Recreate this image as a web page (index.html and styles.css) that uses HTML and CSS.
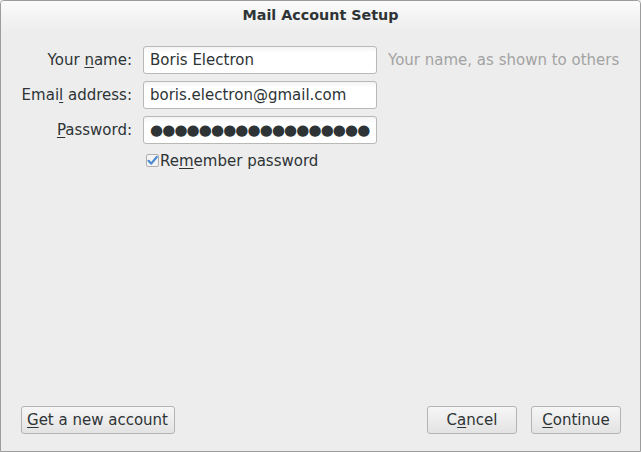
FILE: index.html
```html
<!DOCTYPE html>
<html>
<head>
<meta charset="utf-8">
<link rel="stylesheet" href="styles.css">
</head>
<body>
<div class="window">
  <div class="titlebar">Mail Account Setup</div>
  <div class="content">
    <div class="form">
      <label class="label">Your <u>n</u>ame:</label>
      <div class="input">Boris Electron</div>
      <div class="hint">Your name, as shown to others</div>

      <label class="label">Emai<u>l</u> address:</label>
      <div class="input">boris.electron@gmail.com</div>
      <div></div>

      <label class="label"><u>P</u>assword:</label>
      <div class="input password"><span class="dots">●●●●●●●●●●●●●●●●●●</span><span class="caret"></span></div>
      <div></div>

      <div></div>
      <div class="remember">
        <span class="checkbox"><svg width="13" height="13" viewBox="0 0 13 13"><path d="M2.5 6.8 L5.2 9.6 L10.8 3" fill="none" stroke="#4a8ad2" stroke-width="2.2" stroke-linecap="round" stroke-linejoin="round"/></svg></span>
        <span>Re<u>m</u>ember password</span>
      </div>
      <div></div>
    </div>
    <div class="spacer"></div>
    <div class="buttons">
      <button class="btn"><u>G</u>et a new account</button>
      <div class="grow"></div>
      <button class="btn narrow">C<u>a</u>ncel</button>
      <button class="btn narrow"><u>C</u>ontinue</button>
    </div>
  </div>
</div>
</body>
</html>
```
FILE: styles.css
```css
html, body {
  margin: 0;
  padding: 0;
  background: #ededed;
}
body {
  font-family: "DejaVu Sans", sans-serif;
  color: #2e3436;
}
.window {
  width: 641px;
  height: 452px;
  box-sizing: border-box;
  border: 1px solid #9c9c9c;
  border-radius: 4px 4px 0 0;
  background: #ededed;
  display: flex;
  flex-direction: column;
  overflow: hidden;
}
.titlebar {
  height: 30px;
  flex: none;
  background: linear-gradient(#fbfbfb, #ededed);
  text-align: center;
  font-weight: bold;
  font-size: 14.3px;
  line-height: 28px;
  color: #2e3436;
}
.content {
  flex: 1;
  display: flex;
  flex-direction: column;
  padding: 15px 19px 17px 20px;
}
.form {
  display: grid;
  grid-template-columns: 111px 234px auto;
  column-gap: 11px;
  row-gap: 7px;
  align-items: center;
  font-size: 15px;
}
.label {
  text-align: right;
  white-space: nowrap;
}
u {
  text-decoration: underline;
  text-underline-offset: 2px;
}
.input {
  height: 28px;
  box-sizing: border-box;
  border: 1px solid #b8b8b5;
  border-radius: 3px;
  background: linear-gradient(#f4f4f4, #ffffff 6px);
  padding: 0 6px;
  line-height: 26px;
  white-space: nowrap;
  overflow: hidden;
  color: #2e3436;
}
.password {
  display: flex;
  align-items: center;
}
.dots {
  letter-spacing: -0.9px;
  font-size: 15px;
}
.caret {
  width: 1px;
  height: 18px;
  background: #2e3436;
  margin-left: 1px;
}
.hint {
  color: #a3a3a3;
  white-space: nowrap;
}
.remember {
  display: flex;
  align-items: center;
  padding-left: 3px;
  margin-top: 1px;
}
.checkbox {
  width: 13px;
  height: 13px;
  box-sizing: border-box;
  border: 1px solid #b0b0b0;
  border-radius: 2px;
  background: #f4f4f4;
  position: relative;
  margin-right: 1px;
  margin-top: -1px;
}
.checkbox svg {
  position: absolute;
  left: -1px;
  top: -1px;
}
.spacer {
  flex: 1;
}
.buttons {
  display: flex;
  align-items: center;
  gap: 14px;
}
.grow {
  flex: 1;
}
.btn {
  height: 28px;
  box-sizing: border-box;
  border: 1px solid #b3b3b3;
  border-radius: 3px;
  background: linear-gradient(#f6f6f6, #e3e3e3);
  font-family: "DejaVu Sans", sans-serif;
  font-size: 15px;
  color: #2e3436;
  padding: 0 5px;
  margin: 0;
}
.btn:first-child {
  width: 154px;
  text-align: left;
}
.narrow {
  width: 90px;
}
```
